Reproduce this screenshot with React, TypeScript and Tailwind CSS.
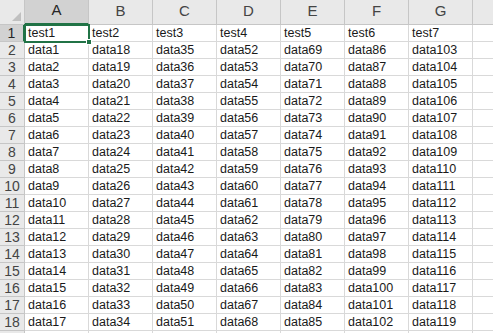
const COLS = ["A", "B", "C", "D", "E", "F", "G", ""];
const ROWS = 19;

function cellText(row: number, col: number): string {
  if (col > 6 || row > 18) return "";
  if (row === 1) return "test" + (col + 1);
  return "data" + (col * 17 + row - 1);
}

export default function App() {
  return (
    <div
      className="w-[493px] h-[333px] overflow-hidden bg-white text-[#1a1a1a]"
      style={{ fontFamily: '"Liberation Sans", Arial, sans-serif' }}
    >
      <div className="grid grid-cols-[25px_repeat(8,64px)] grid-rows-[25px_repeat(19,17px)] relative">
        {/* corner */}
        <div className="bg-[#e9e9e9] border-r border-b border-[#c6c6c6] relative">
          <div className="absolute right-[3px] bottom-[3px] w-0 h-0 border-l-[9px] border-l-transparent border-b-[9px] border-b-[#c0c0c0]" />
        </div>
        {COLS.map((c, i) => (
          <div
            key={c + i}
            className={
              "flex items-end justify-center pb-[2px] text-[15px] border-r border-[#c6c6c6] " +
              (i === 0
                ? "bg-[#d2d2d2] border-b-2 border-b-[#217346] text-[#262626]"
                : "bg-[#e9e9e9] text-[#444] border-b border-b-[#c6c6c6]")
            }
          >
            {c}
          </div>
        ))}
        {Array.from({ length: ROWS }, (_, r) => {
          const row = r + 1;
          return [
            <div
              key={"h" + row}
              className={
                "flex items-center justify-center text-[14px] border-b border-[#c6c6c6] " +
                (row === 1
                  ? "bg-[#d2d2d2] text-[#262626] border-r-2 border-r-[#217346]"
                  : "bg-[#e9e9e9] text-[#444] border-r border-r-[#c6c6c6]")
              }
            >
              {row <= 18 ? row : ""}
            </div>,
            ...COLS.map((_, c) => (
              <div
                key={row + "-" + c}
                className="flex items-center pl-[3px] text-[12.5px] leading-none border-r border-b border-[#d9d9d9] whitespace-nowrap overflow-hidden"
              >
                {cellText(row, c)}
              </div>
            )),
          ];
        })}
        {/* selection */}
        <div className="absolute left-[24px] top-[24px] w-[66px] h-[19px] border-2 border-[#217346] pointer-events-none">
          <div className="absolute -right-[4px] -bottom-[4px] w-[6px] h-[6px] bg-[#217346] border border-white" />
        </div>
      </div>
    </div>
  );
}
